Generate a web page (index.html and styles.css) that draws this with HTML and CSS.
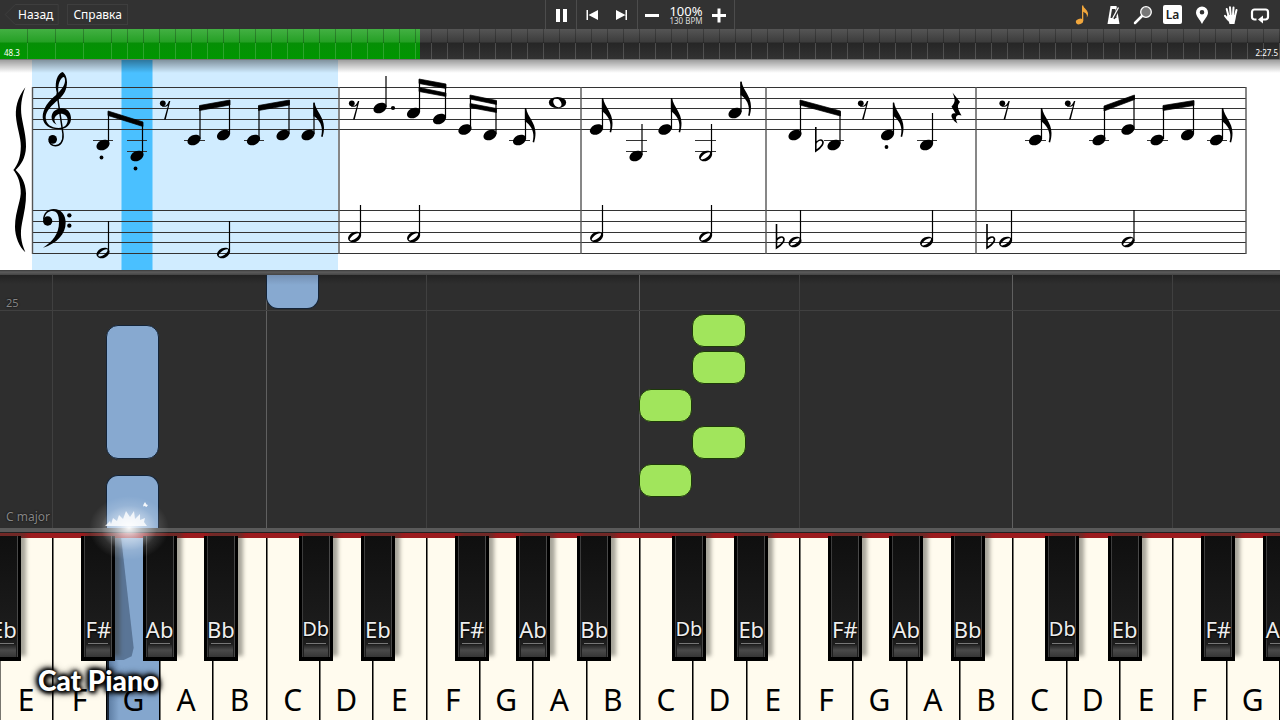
FILE: index.html
```html
<!DOCTYPE html>
<html lang="ru">
<head>
<meta charset="utf-8">
<meta name="viewport" content="width=device-width, initial-scale=1">
<title>Cat Piano</title>
<link rel="stylesheet" href="styles.css">
</head>
<body>
<header class="toolbar">
  <nav class="nav">
    <button class="nav-btn back" type="button"><svg class="back-shape" viewBox="0 0 54 21" aria-hidden="true"><path d="M53.5.5H10.5L.5 10.5l10 10h43z"/></svg>Назад</button>
    <button class="nav-btn" type="button">Справка</button>
  </nav>
  <div class="transport">
    <div class="group">
      <button class="icon-btn" type="button" aria-label="Пауза"><svg width="20" height="20" viewBox="0 0 20 20"><path d="M5 4h4v13H5zM12 4h4v13h-4z"/></svg></button>
    </div>
    <div class="group">
      <button class="icon-btn" type="button" aria-label="В начало"><svg width="20" height="20" viewBox="0 0 20 20"><path d="M4.500 5H6v10H4.500zM16 5v10L6.500 10z"/></svg></button>
      <button class="icon-btn" type="button" aria-label="Вперёд"><svg width="20" height="20" viewBox="0 0 20 20"><path d="M13.500 5H15v10h-1.500zM4 5v10l9.500-5z"/></svg></button>
    </div>
    <div class="group tempo">
      <button class="icon-btn" type="button" aria-label="Медленнее"><svg width="20" height="20" viewBox="0 0 20 20"><path d="M2 9h14v3H2z"/></svg></button>
      <div class="speed"><span class="percent">100%</span><span class="bpm">130 BPM</span></div>
      <button class="icon-btn" type="button" aria-label="Быстрее"><svg width="20" height="20" viewBox="0 0 20 20"><path d="M3 9h14v3H3zM8.500 3.500h3v14h-3z"/></svg></button>
    </div>
  </div>
  <div class="tools">
    <button class="icon-btn" type="button" aria-label="Ноты"><svg width="20" height="22" viewBox="0 0 20 22"><g fill="#f0a63c"><ellipse cx="6.500" cy="17.500" rx="3.700" ry="2.700" transform="rotate(-20 6.500 17.500)"/><path d="M9 1.500h1.300c0 3 5 4 4.700 9-.2 1.500-.7 2.300-1.200 3 .7-3-.7-4.600-3.500-6V17H9z"/><path d="M10.300 5c2 1 4.700 3 4.500 6-1.300-1.700-2.800-2.200-4.500-3.200z"/></g></svg></button>
    <button class="icon-btn" type="button" aria-label="Метроном"><svg width="20" height="22" viewBox="0 0 20 22"><path d="M7.500 2h6l3 18H4.500z"/><path d="M9 5h3.300l1.200 9H7.500z" fill="#323232"/><path d="M10.500 14.500L15.500 4" stroke="#323232" stroke-width="3"/><path d="M9.500 14.500L15.500 3.500" stroke="#fff" stroke-width="1.300"/></svg></button>
    <button class="icon-btn" type="button" aria-label="Масштаб"><svg width="20" height="22" viewBox="0 0 20 22"><path d="M2 19L9 12" stroke="#fff" stroke-width="2.500" stroke-linecap="round"/><circle cx="13" cy="8" r="5.300" fill="#777" stroke="#fff" stroke-width="1.300"/></svg></button>
    <button class="icon-btn" type="button" aria-label="Названия нот"><span class="la">La</span></button>
    <button class="icon-btn" type="button" aria-label="Метка"><svg width="20" height="22" viewBox="0 0 20 22"><path fill-rule="evenodd" d="M10 2.500a6 6 0 0 1 6 6c0 4-4 7-6 11.500C8 15.500 4 12.500 4 8.500a6 6 0 0 1 6-6zm0 3.500a2.300 2.300 0 1 0 0 4.600A2.300 2.300 0 0 0 10 6z"/></svg></button>
    <button class="icon-btn" type="button" aria-label="Руки"><svg width="20" height="22" viewBox="0 0 20 22"><g stroke="#fff" stroke-width="2" stroke-linecap="round"><path d="M7.500 12L5.700 5M9.700 11L9 3.300M12 11l.5-7.500M14 12l1.500-6M7 15.500L4 11.800"/></g><path d="M6.500 11l8.500 0c0 4-1 5-1.500 9h-5C8.300 17 6 16 5.500 14z"/></svg></button>
    <button class="icon-btn" type="button" aria-label="Повтор"><svg width="20" height="22" viewBox="0 0 20 22"><path d="M6.500 15.500H4.500a2.500 2.500 0 0 1-2.500-2.500V8a2.500 2.500 0 0 1 2.500-2.500h11A2.500 2.500 0 0 1 18 8v5a2.500 2.500 0 0 1-2.500 2.500H12" fill="none" stroke="#fff" stroke-width="2.200"/><path d="M8 15.500L13 11.500v8z"/></svg></button>
  </div>
</header>

<div class="timeline" role="progressbar" aria-label="Позиция" aria-valuemin="0" aria-valuemax="147.5" aria-valuenow="48.3">
  <div class="played"></div>
  <div class="ticks"></div>
  <span class="time now">48.3</span>
  <span class="time total">2:27.5</span>
</div>

<main class="stage">
<section class="score" aria-label="Ноты">
<svg class="sheet" viewBox="0 0 1280 210">
  <defs>
    <ellipse id="n" rx="6.900" ry="4.900" transform="rotate(-25)"/>
    <g id="h"><path fill-rule="evenodd" transform="rotate(-25)" d="M-6.800 0a6.800 4.900 0 1 0 13.600 0a6.800 4.900 0 1 0-13.600 0zM-5.500.6C-5-1.500 3-3.800 5.400-1.500C6.500 1.200-4.500 4-5.500.6z"/></g>
    <path id="w" fill-rule="evenodd" d="M-8.700 0a8.700 5.500 0 1 0 17.400 0a8.700 5.500 0 1 0-17.400 0zM-3.500-3C-.5-6 4.500-1 4 2.500C3 6-1.500 5-3.300 2C-4.600 0-4.500-2-3.500-3z"/>
    <path id="f" d="M-.6 0H.6C2 9 10 14 10 25c0 4-.6 6.500-1.400 9.500l-1.500-.4C9 27 8 20 .6 14H-.6z"/>
    <g id="r"><circle cx="-2.200" cy="-6.700" r="2.900"/><path d="M-3-4.500C0-3 2.500-5 4-9h1.300L.7 9.500H-1L3-4.500C1.500-3-1-3-3-3.500z"/></g>
    <path id="q" d="M-3.500-15.500L4-6C1-2.500 1-.5 5.500 7.500C0 5.500-1.500 9.500 1.500 15.500C-7 10-5.500 4-.5 5.500L-4.500-1.500C-.5-6-.5-8-3.500-15.500z"/>
  </defs>
  <path d="M32 0h306v210H32z" fill="#d0ecff"/>
  <path d="M121.500 0h31v210h-31z" fill="#4ac0ff"/>
  <g class="lines">
    <path d="M32 27.500H1246M32 38.500H1246M32 48.500H1246M32 59.500H1246M32 69.500H1246M32 150.500H1246M32 161.500H1246M32 172.500H1246M32 182.500H1246M32 193.500H1246"/>
    <path d="M93 80.500h20M127 80.500h20M127 91.500h20M184 80.500h21M244 80.500h20M509 80.500h21M626 80.500h21M626 91.500h21M695 80.500h21M695 91.500h21M824 80.500h20M917 80.500h20M1025 80.500h21M1089 80.500h20M1147 80.500h21M1207 80.500h20"/>
  </g>
  <path class="bars" d="M32.500 27V194M339 27V194M581 27V194M766 27V194M976 27V194M1246 27V194"/>
  <g transform="scale(.33333)">
    <path d="M76 82C52 115 44 145 49 180C54 215 65 240 62 270C60 300 50 318 40 330C50 342 60 360 62 390C65 420 46 450 45 500C45 530 58 560 76 577C62 545 60 520 66 490C72 460 79 430 78 400C77 365 62 345 47 330C62 315 77 295 78 260C79 230 70 200 65 170C61 140 64 115 76 82z"/>
    <path fill-rule="evenodd" d="M187 36C172 42 165 64 168 88L171 103C146 122 128 146 128 172C129 196 150 208 174 208C200 208 214 193 213 173C212 155 199 143 182 145C164 147 153 160 155 175C156 184 162 191 170 194C164 187 162 181 164 174C167 166 174 161 182 161C194 161 203 169 203 180C203 195 192 204 176 204C153 204 137 192 137 171C138 152 155 136 175 119C192 106 201 88 201 67C201 52 195 40 187 36zM190 51C180 56 173 72 175 98C189 84 195 72 195 62C195 54 193 51 190 51z"/>
    <path d="M171 100L189 222C191 245 180 257 166 257C156 257 149 250 147 242" fill="none" stroke="#000" stroke-width="4.500"/>
    <circle cx="158" cy="238" r="13"/>
    <path d="M129 480C129 458 144 447 161 447C184 447 197 465 197 488C197 522 171 550 129 563C158 545 177 522 177 487C177 466 172 453 157 453C146 453 136 460 134 474z"/>
    <circle cx="143" cy="483" r="14"/><circle cx="208" cy="466" r="6.500"/><circle cx="208" cy="497" r="6.500"/>
  </g>
  <path class="stems" d="M108.500 52V84M142.500 63V95M200 46V79M229.500 41V74M259 46V79M289 41V74M314 43V74M386 16V47M419.500 20V52M445.500 25V58M470.500 36V69M496 41V74M525.500 49V79M602.500 39V69M642 64V95M671.500 39V69M711.500 64V95M741 22V52M800.500 41V74M840 52V84M893.500 43V74M932.500 53V84M1041.500 49V79M1104.500 47V79M1134 36V69M1163.500 46V79M1193.500 41V74M1222.500 49V79M108.500 161V192M229.500 161V192M360.500 145V176M419.500 145V176M602.500 145V176M711.500 145V176M800.500 150V181M932.500 150V181M1011.500 150V181M1134 150V181"/>
  <path class="beams" d="M108 51L143 62v4.500L108 55.500zM199.500 45.500L230 40v5l-30.500 5.500zM258.500 45.500L289.500 40v5l-31 5.500zM419 19l27 5v4.500l-27-5zM419 27.500l27 5.500v3.500l-27-5zM470 35l26.500 5.500v4L470 39zM470 43.500l26.500 5v4L470 47.500zM800 40l40.500 11v5L800 45zM1104 46l30.500-11v4.500L1104 51zM1163 45.500l31-5v5l-31 5z"/>
  <g>
    <use href="#n" transform="translate(103 85)"/><use href="#n" transform="translate(137 96)"/><use href="#n" transform="translate(194 80)"/><use href="#n" transform="translate(223.500 75)"/><use href="#n" transform="translate(253.500 80)"/><use href="#n" transform="translate(283 75)"/><use href="#n" transform="translate(308 75)"/>
    <use href="#n" transform="translate(380 48)"/><use href="#n" transform="translate(413.500 53)"/><use href="#n" transform="translate(439.500 59)"/><use href="#n" transform="translate(465 69.500)"/><use href="#n" transform="translate(490 75)"/><use href="#n" transform="translate(519.500 80)"/>
    <use href="#n" transform="translate(596.500 69.500)"/><use href="#n" transform="translate(636 96)"/><use href="#n" transform="translate(665 69.500)"/><use href="#n" transform="translate(735 53)"/>
    <use href="#n" transform="translate(795 75)"/><use href="#n" transform="translate(834 85)"/><use href="#n" transform="translate(887.500 75)"/><use href="#n" transform="translate(926.500 85)"/>
    <use href="#n" transform="translate(1035.500 80)"/><use href="#n" transform="translate(1099 80)"/><use href="#n" transform="translate(1128 69.500)"/><use href="#n" transform="translate(1157 80)"/><use href="#n" transform="translate(1187.500 75)"/><use href="#n" transform="translate(1216.500 80)"/>
  </g>
  <g>
    <use href="#h" x="103" y="193"/><use href="#h" x="223.500" y="193"/><use href="#h" x="354.500" y="177"/><use href="#h" x="413.500" y="177"/><use href="#h" x="596.500" y="177"/><use href="#h" x="705.500" y="177"/><use href="#h" x="705.500" y="96"/><use href="#h" x="795" y="182"/><use href="#h" x="926.500" y="182"/><use href="#h" x="1005.500" y="182"/><use href="#h" x="1128" y="182"/>
    <use href="#w" x="557.500" y="42.500"/>
  </g>
  <g>
    <use href="#f" x="314" y="42.500"/><use href="#f" x="525.500" y="48"/><use href="#f" x="602.500" y="38"/><use href="#f" x="671.500" y="38"/><use href="#f" x="741" y="21.500"/><use href="#f" x="893.500" y="42.500"/><use href="#f" x="1041.500" y="48"/><use href="#f" x="1222.500" y="48"/>
    <use href="#r" x="165" y="50"/><use href="#r" x="354" y="50"/><use href="#r" x="863" y="50"/><use href="#r" x="1004.500" y="50"/><use href="#r" x="1070" y="50"/>
    <use href="#q" x="956" y="48"/>
  </g>
  <g class="flats">
    <path d="M815.800 67V91C822 87 824 83 822.500 81C821 79 817 80.500 815.800 83.500M776.500 164V188C783 184 785 180 783.500 178C782 176 778 177.500 776.500 180.500M987 164V188C993.500 184 995.500 180 994 178C992.500 176 988.500 177.500 987 180.500"/>
  </g>
  <g><circle cx="101.500" cy="97.500" r="1.900"/><circle cx="135.500" cy="108.500" r="1.900"/><circle cx="393" cy="48" r="2.100"/><circle cx="886.500" cy="87" r="1.900"/></g>
</svg>
</section>

<section class="roll" aria-label="Падающие ноты">
  <i class="grid-line" style="--k:1"></i><i class="grid-line octave" style="--k:5"></i><i class="grid-line" style="--k:8"></i><i class="grid-line octave" style="--k:12"></i><i class="grid-line" style="--k:15"></i><i class="grid-line octave" style="--k:19"></i><i class="grid-line" style="--k:22"></i>
  <i class="measure-line"></i>
  <span class="measure">25</span>
  <span class="scale-name">C major</span>
  <div class="note left top-cut" style="--k:5;--y:0;--h:34"></div>
  <div class="note left" style="--k:2;--y:50;--h:134"></div>
  <div class="note left bottom-cut" style="--k:2;--y:200;--h:54"></div>
  <div class="note right" style="--k:13;--y:39;--h:33"></div>
  <div class="note right" style="--k:13;--y:76;--h:33"></div>
  <div class="note right" style="--k:12;--y:114;--h:33"></div>
  <div class="note right" style="--k:13;--y:151;--h:33"></div>
  <div class="note right" style="--k:12;--y:189;--h:33"></div>
</section>
</main>

<section class="keyboard" aria-label="Клавиатура">
  <div class="key"><button class="white" type="button">E</button><button class="black eb-edge" type="button">Eb</button></div>
  <div class="key"><button class="white" type="button">F</button><button class="black fs" type="button">F#</button></div>
  <div class="key"><button class="white pressed" type="button">G</button><button class="black ab" type="button">Ab</button></div>
  <div class="key"><button class="white" type="button">A</button><button class="black bb" type="button">Bb</button></div>
  <div class="key"><button class="white" type="button">B</button></div>
  <div class="key"><button class="white" type="button">C</button><button class="black db" type="button">Db</button></div>
  <div class="key"><button class="white" type="button">D</button><button class="black eb" type="button">Eb</button></div>
  <div class="key"><button class="white" type="button">E</button></div>
  <div class="key"><button class="white" type="button">F</button><button class="black fs" type="button">F#</button></div>
  <div class="key"><button class="white" type="button">G</button><button class="black ab" type="button">Ab</button></div>
  <div class="key"><button class="white" type="button">A</button><button class="black bb" type="button">Bb</button></div>
  <div class="key"><button class="white" type="button">B</button></div>
  <div class="key"><button class="white" type="button">C</button><button class="black db" type="button">Db</button></div>
  <div class="key"><button class="white" type="button">D</button><button class="black eb" type="button">Eb</button></div>
  <div class="key"><button class="white" type="button">E</button></div>
  <div class="key"><button class="white" type="button">F</button><button class="black fs" type="button">F#</button></div>
  <div class="key"><button class="white" type="button">G</button><button class="black ab" type="button">Ab</button></div>
  <div class="key"><button class="white" type="button">A</button><button class="black bb" type="button">Bb</button></div>
  <div class="key"><button class="white" type="button">B</button></div>
  <div class="key"><button class="white" type="button">C</button><button class="black db" type="button">Db</button></div>
  <div class="key"><button class="white" type="button">D</button><button class="black eb" type="button">Eb</button></div>
  <div class="key"><button class="white" type="button">E</button></div>
  <div class="key"><button class="white" type="button">F</button><button class="black fs" type="button">F#</button></div>
  <div class="key"><button class="white" type="button">G</button><button class="black ab" type="button">Ab</button></div>
</section>
<svg class="spark" width="100" height="100" viewBox="0 0 100 100" aria-hidden="true">
  <defs><radialGradient id="glow"><stop offset="0" stop-color="#fff" stop-opacity=".95"/><stop offset=".35" stop-color="#eef4fb" stop-opacity=".55"/><stop offset=".7" stop-color="#fff" stop-opacity=".13"/><stop offset="1" stop-color="#fff" stop-opacity="0"/></radialGradient></defs>
  <ellipse cx="52" cy="48" rx="40" ry="32" fill="url(#glow)"/>
  <path d="M28 46l5-5 1 3 2-6 4 3 2-6 4 4 3-8 4 6 4-6 1 8 5-5v6l5-2-1 4 3 4z" fill="#fff" opacity=".8"/>
  <path d="M68 22l1.500 2.500L71 25l-1.500 2-2-1-1.500 .5 .5-2z" fill="#fff" opacity=".9"/>
</svg>
<div class="watermark">Cat Piano</div>
</body>
</html>
```
FILE: styles.css
```css
* { box-sizing: border-box; }

body {
  margin: 0;
  min-height: 100vh;
  display: flex;
  flex-direction: column;
  position: relative;
  overflow-x: hidden;
  background: #2e2e2e;
  color: #fff;
  font-family: "Noto Sans", "Open Sans", sans-serif;
}

button {
  margin: 0;
  padding: 0;
  border: 0;
  background: none;
  color: inherit;
  font: inherit;
}

.toolbar {
  display: grid;
  grid-template-columns: 1fr auto 1fr;
  align-items: center;
  height: 29px;
  background: #323232;
}

.nav { display: flex; gap: 8px; padding-left: 4px; }

.nav-btn {
  position: relative;
  height: 21px;
  padding: 0 5px;
  border: 1px solid #3e3e3e;
  font-size: 12px;
  line-height: 19px;
}

.nav-btn.back { border-color: transparent; padding: 0 5px 0 13px; }

.back-shape {
  position: absolute;
  inset: -1px;
  width: calc(100% + 2px);
  height: 21px;
  fill: none;
  stroke: #3e3e3e;
}

.transport { display: flex; height: 29px; border-right: 1px solid #4c4c4c; }
.group { display: flex; align-items: center; border-left: 1px solid #4c4c4c; }

.icon-btn {
  display: flex;
  align-items: center;
  justify-content: center;
  width: 30px;
  height: 28px;
}

.icon-btn svg { fill: #fff; }
.speed { display: flex; flex-direction: column; align-items: center; width: 36px; }
.percent { font-size: 13px; line-height: 12px; }
.bpm { font-size: 8px; line-height: 8px; white-space: nowrap; color: #ddd; }
.tools { display: flex; justify-content: flex-end; gap: 1px; padding-right: 6px; }
.tools .icon-btn { width: 29px; }
.tools .icon-btn:nth-child(n + 5) { width: 28px; }

.la {
  width: 19px;
  height: 19px;
  border-radius: 2px;
  background: #fff;
  color: #222;
  font-size: 12px;
  font-weight: 600;
  line-height: 20px;
}

.timeline {
  position: relative;
  height: 31px;
  border-bottom: 1px solid #777;
  background: linear-gradient(#555 0, #3c3c3c 13px, #262626 14px, #323232 30px);
}

.played {
  width: calc(100% * 105 / 320);
  height: 30px;
  background: linear-gradient(#43b043 0, #25a025 13px, #068f06 14px, #009700 30px);
}

.ticks {
  position: absolute;
  inset: 0;
  background:
    repeating-linear-gradient(90deg, transparent 0 27px, rgba(0, 0, 0, .25) 27px 28px) 0 0 / 112px 14px no-repeat,
    repeating-linear-gradient(90deg, transparent 0 15px, rgba(0, 0, 0, .25) 15px 16px) 112px 0 / 100% 14px no-repeat,
    repeating-linear-gradient(90deg, transparent 0 27px, rgba(255, 255, 255, .17) 27px 28px) 0 14px / 112px 100% no-repeat,
    repeating-linear-gradient(90deg, transparent 0 15px, rgba(255, 255, 255, .17) 15px 16px) 112px 14px / 100% 100% no-repeat;
}

.time { position: absolute; bottom: 1px; font-size: 8px; line-height: 10px; }
.now { left: 4px; }
.total { right: 2px; }

.stage { flex: 1; display: flex; flex-direction: column; }

.score {
  position: relative;
  background: #fff;
}

.score::after {
  content: "";
  position: absolute;
  inset: 0 0 auto;
  height: 13px;
  background: linear-gradient(rgba(0, 0, 0, .38), transparent);
}

.sheet { display: block; width: 100%; }
.lines { fill: none; stroke: #333; stroke-width: 1.2px; }
.bars { fill: none; stroke: #555; stroke-width: 1.4px; }
.stems { fill: none; stroke: #000; stroke-width: 1.2px; }
.beams { stroke: #000; stroke-width: 0.7px; }
.flats { fill: none; stroke: #000; stroke-width: 1.6px; }

.roll {
  position: relative;
  flex: 1;
  min-height: 262px;
  background: linear-gradient(#383838, #5c5c5c 2px, #444 5px, #222 5px, #2e2e2e 14px);
  border-bottom: 1px solid #222;
  padding: 5px 0 4px;
  overflow: hidden;
}

.roll::after {
  content: "";
  position: absolute;
  inset: auto 0 0;
  height: 4px;
  background: #5a5a5a;
}

.grid-line {
  position: absolute;
  top: 5px;
  bottom: 0;
  left: calc(var(--k) * 100% / 24 - 1px);
  width: 1px;
  background: #404040;
}

.grid-line.octave { background: #606060; }

.measure-line {
  position: absolute;
  top: 40px;
  left: 0;
  right: 0;
  height: 1px;
  background: #404040;
}

.measure, .scale-name { position: absolute; left: 6px; color: #858585; text-shadow: 0 0 2px #000; }
.measure { top: 25px; font-size: 11px; line-height: 16px; }
.scale-name { bottom: 7px; font-size: 12px; line-height: 16px; }

.note {
  position: absolute;
  left: calc(var(--k) * 100% / 24 - 1px);
  top: calc(var(--y) * 1px + 5px);
  width: calc(100% / 24);
  height: calc(var(--h) * 1px);
  border-radius: 12px;
}

.left { background: #87a9d0; border: 1px solid #142438; }
.right { background: #a1e55c; border: 1px solid #1d3a08; }
.top-cut { border-top: 0; border-radius: 0 0 12px 12px; background: linear-gradient(#7591b4, #87a9d0 10px); }
.bottom-cut { border-bottom: 0; border-radius: 12px 12px 0 0; }

.keyboard {
  position: relative;
  display: flex;
  height: 187px;
  border-top: 5px solid #9c1c1e;
  background: #111;
  clip-path: inset(0);
}

.key { position: relative; flex: 1 1 0; min-width: 0; }

.white {
  display: flex;
  align-items: flex-end;
  justify-content: center;
  width: 100%;
  height: 182px;
  padding-bottom: 4px;
  padding-right: 1px;
  border-right: 1px solid #000;
  border-left: 1px solid #77756e;
  background: #fffbee;
  color: #000;
  font-size: 30px;
  line-height: 32px;
}

.pressed {
  border-left: 2px solid #1b2736;
  background: linear-gradient(90deg, #5f7fa5, #84a6cd 10px);
}

.pressed::before {
  content: "";
  position: absolute;
  top: 0;
  left: 2px;
  width: 25px;
  height: 122px;
  background: #5a7596;
  clip-path: polygon(0 0, 50% 0, 100% 90%, 92% 97%, 60% 100%, 0 100%);
}

.black {
  position: absolute;
  z-index: 1;
  top: -2px;
  display: flex;
  align-items: flex-end;
  justify-content: center;
  width: 34px;
  height: 125px;
  padding-bottom: 16px;
  border: solid #000;
  border-width: 0 3px 4px;
  background:
    linear-gradient(#242424, #4a4a4a 5px, #363636) 2px 109px / 24px 12px no-repeat,
    linear-gradient(#777, #777) 4px 107px / 20px 1px no-repeat,
    linear-gradient(90deg, #3c3c3c 1px, transparent 1px 27px, #484848 27px),
    linear-gradient(#0f0f0f, #1d1d1d 100px);
  box-shadow: 5px -5px 4px rgba(60, 60, 50, .45);
  color: #eee;
  font-size: 22px;
  line-height: 24px;
  text-shadow: 0 0 2px #000, 0 1px 2px #000;
}

.eb-edge { left: -13px; }
.fs { left: 28px; }
.ab { left: 36px; }
.bb { left: 44px; }
.db { left: 32px; font-size: 20px; }
.eb { left: 41px; }

.spark {
  position: absolute;
  z-index: 2;
  left: calc(100% / 12 - 30px);
  bottom: 140px;
}

.watermark {
  position: absolute;
  z-index: 3;
  left: 38px;
  bottom: 24px;
  font-family: Lato, sans-serif;
  font-size: 28px;
  font-weight: 900;
  line-height: 32px;
  text-shadow: 0 0 3px #000, 0 0 5px #000, 0 0 5px #000, 2px 2px 5px #000, -2px -1px 6px #000, 0 0 10px #000;
}
```
